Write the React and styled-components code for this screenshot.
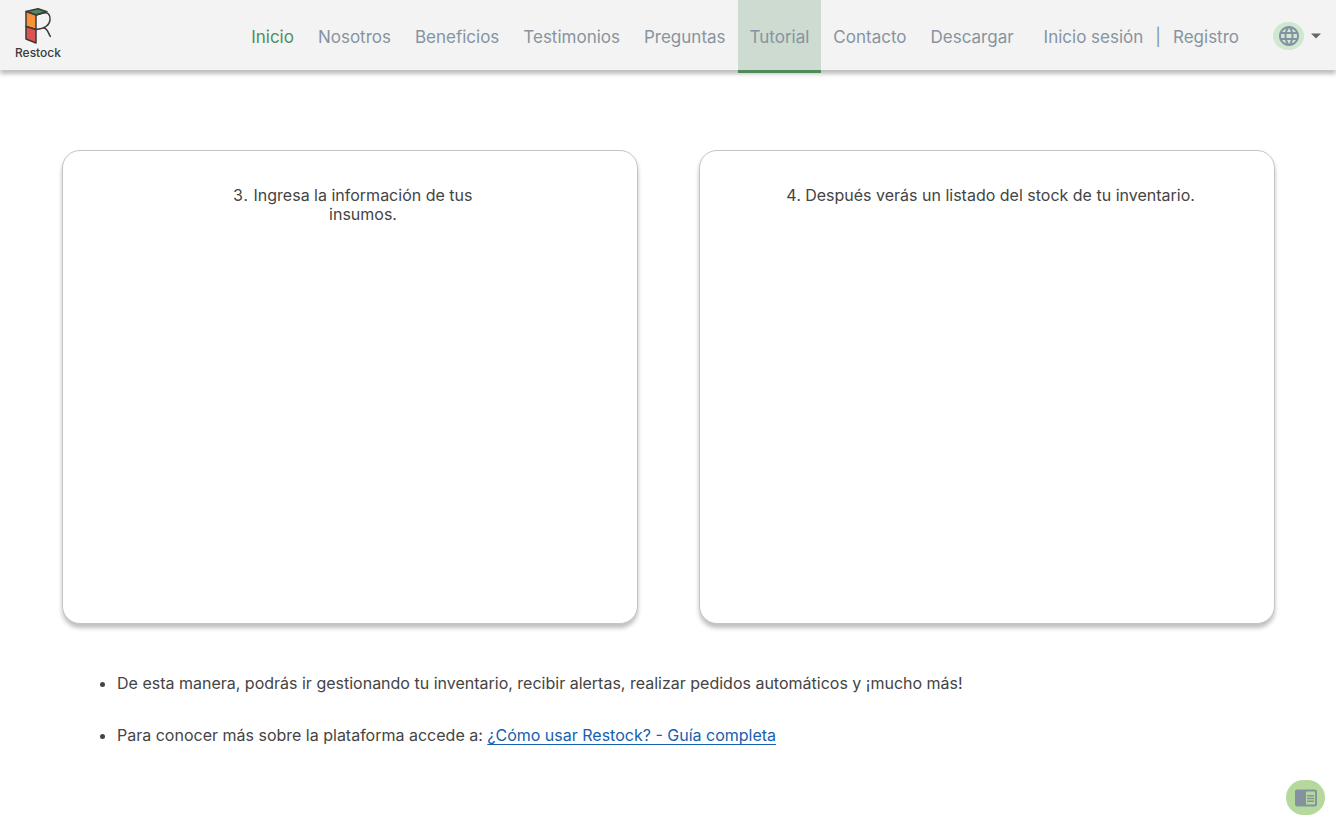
import React from "react";
import styled, { createGlobalStyle } from "styled-components";

const GlobalStyle = createGlobalStyle`
  *, *::before, *::after { box-sizing: border-box; }
  body {
    margin: 0;
    background: #fff;
    color: #444;
    font: 400 16px/19px Inter, "Liberation Sans", sans-serif;
  }
`;

const Page = styled.div`
  display: flex;
  flex-direction: column;
  min-height: 100vh;
`;

const Header = styled.header`
  display: flex;
  align-items: stretch;
  min-height: 70px;
  padding: 0 14px 0 15px;
  background: #f3f3f3;
  box-shadow: 0 4px 4px rgba(0, 0, 0, 0.25);
`;

const Brand = styled.a`
  display: flex;
  flex-direction: column;
  align-items: center;
  padding-top: 7px;
  color: #3a3a3a;
  font-size: 12px;
  font-weight: 500;
  line-height: 16px;
  text-decoration: none;
`;

const Nav = styled.nav`
  display: flex;
  margin-left: auto;
`;

const NavLink = styled.a`
  display: flex;
  align-items: center;
  padding: 3px 12px 0;
  margin-bottom: -3px;
  border-bottom: 3px solid ${(p) => (p.$active ? "#4f8a5b" : "transparent")};
  background: ${(p) => (p.$active ? "#cddbd1" : "transparent")};
  color: ${(p) => (p.$current ? "#4f8f5b" : "#8793a0")};
  font-size: 17px;
  line-height: 24px;
  text-decoration: none;
`;

const Account = styled.div`
  display: flex;
  align-items: center;
  gap: 12px;
  margin-left: 18px;
  padding-top: 3px;
  color: #8793a0;
  font-size: 17px;
  line-height: 24px;
`;

const AccountLink = styled.a`
  color: inherit;
  text-decoration: none;
`;

const LanguageButton = styled.button`
  display: flex;
  align-items: center;
  align-self: center;
  gap: 6px;
  margin-left: 34px;
  padding: 2px 0 0;
  border: 0;
  background: none;
  cursor: pointer;
`;

const Globe = styled.span`
  display: grid;
  place-items: center;
  width: 31px;
  height: 28px;
  border-radius: 50%;
  background: #cfe8d2;
`;

const Main = styled.main`
  flex: 1;
  padding: 80px 61px 0 62px;
`;

const Cards = styled.div`
  display: grid;
  grid-template-columns: 1fr 1fr;
  gap: 61px;
`;

const Card = styled.section`
  min-height: 474px;
  padding: 35px 24px;
  border: 1px solid #c4c4c4;
  border-radius: 18px;
  background: #fff;
  box-shadow: 0 4px 4px rgba(0, 0, 0, 0.25);
`;

const Step = styled.ol`
  width: fit-content;
  max-width: ${(p) => (p.$narrow ? "248px" : "none")};
  margin: 0 auto;
  padding-left: 26px;
  text-align: center;
`;

const Notes = styled.ul`
  display: flex;
  flex-direction: column;
  gap: 33px;
  margin: 50px 0 0;
  padding-left: 55px;
`;

const GuideLink = styled.a`
  color: #1560b0;
  text-underline-offset: 3px;
`;

const GuideButton = styled.button`
  position: fixed;
  right: 11px;
  bottom: 13px;
  display: grid;
  place-items: center;
  width: 39px;
  height: 35px;
  padding: 0;
  border: 0;
  border-radius: 18px;
  background: #b5d99c;
  cursor: pointer;
`;

const links = ["Inicio", "Nosotros", "Beneficios", "Testimonios", "Preguntas", "Tutorial", "Contacto", "Descargar"];

function Logo() {
  return (
    <svg width="28" height="38" viewBox="0 0 28 38" aria-hidden="true">
      <g stroke="#3a3a3a" strokeWidth="1.5" strokeLinejoin="round" strokeLinecap="round">
        <path d="M2 4.5 L14 1.7 L23 4.7 L12 8Z" fill="#4f8a5b" />
        <path d="M2 4.5 L12 8 V22.5 L2 19.5Z" fill="#f7913a" />
        <path d="M2 19.5 L12 22.5 V36 L2 32Z" fill="#dc5350" />
        <path d="M12 8 L19 6 C24 4.5 26.5 8 26 13 C25.5 19 21 21.5 12 22.5 M19.5 20.8 C23.5 21.5 24 25.5 26.3 29.5" fill="none" />
      </g>
    </svg>
  );
}

function GlobeIcon() {
  return (
    <svg width="24" height="24" viewBox="0 0 24 24" fill="#84919e" aria-hidden="true">
      <path d="M11.99 2C6.47 2 2 6.48 2 12s4.47 10 9.99 10C17.52 22 22 17.52 22 12S17.52 2 11.99 2zm6.93 6h-2.95a15.65 15.65 0 0 0-1.38-3.56A8.03 8.03 0 0 1 18.92 8zM12 4.04c.83 1.2 1.48 2.53 1.91 3.96h-3.82c.43-1.43 1.08-2.76 1.91-3.96zM4.26 14C4.1 13.36 4 12.69 4 12s.1-1.36.26-2h3.38c-.08.66-.14 1.32-.14 2s.06 1.34.14 2H4.26zm.82 2h2.95c.32 1.25.78 2.45 1.38 3.56A7.99 7.99 0 0 1 5.08 16zm2.95-8H5.08a7.99 7.99 0 0 1 4.33-3.56A15.65 15.65 0 0 0 8.03 8zM12 19.96c-.83-1.2-1.48-2.53-1.91-3.96h3.82c-.43 1.43-1.08 2.76-1.91 3.96zM14.34 14H9.66c-.09-.66-.16-1.32-.16-2s.07-1.35.16-2h4.68c.09.65.16 1.32.16 2s-.07 1.34-.16 2zm.25 5.56c.6-1.11 1.06-2.31 1.38-3.56h2.95a8.03 8.03 0 0 1-4.33 3.56zM16.36 14c.08-.66.14-1.32.14-2s-.06-1.34-.14-2h3.38c.16.64.26 1.31.26 2s-.1 1.36-.26 2h-3.38z" />
    </svg>
  );
}

export default function App() {
  return (
    <Page>
      <GlobalStyle />
      <Header>
        <Brand href="#inicio">
          <Logo />
          Restock
        </Brand>
        <Nav aria-label="Principal">
          {links.map((name) => (
            <NavLink
              key={name}
              href={`#${name.toLowerCase()}`}
              $current={name === "Inicio"}
              $active={name === "Tutorial"}
            >
              {name}
            </NavLink>
          ))}
        </Nav>
        <Account>
          <AccountLink href="#sesion">Inicio sesión</AccountLink>
          <span>|</span>
          <AccountLink href="#registro">Registro</AccountLink>
        </Account>
        <LanguageButton type="button" aria-label="Idioma">
          <Globe>
            <GlobeIcon />
          </Globe>
          <svg width="12" height="6" viewBox="0 0 12 6" aria-hidden="true">
            <path d="M1 0.5h10L6 5.5z" fill="#666" />
          </svg>
        </LanguageButton>
      </Header>
      <Main>
        <Cards>
          <Card>
            <Step start={3} $narrow>
              <li>Ingresa la información de tus insumos.</li>
            </Step>
          </Card>
          <Card>
            <Step start={4}>
              <li>Después verás un listado del stock de tu inventario.</li>
            </Step>
          </Card>
        </Cards>
        <Notes>
          <li>De esta manera, podrás ir gestionando tu inventario, recibir alertas, realizar pedidos automáticos y ¡mucho más!</li>
          <li>
            Para conocer más sobre la plataforma accede a:{" "}
            <GuideLink href="#guia">¿Cómo usar Restock? - Guía completa</GuideLink>
          </li>
        </Notes>
      </Main>
      <GuideButton type="button" aria-label="Guía">
        <svg width="24" height="24" viewBox="0 0 24 24" aria-hidden="true">
          <path
            fill="#84919e"
            fillRule="evenodd"
            d="M3 3.5h18a2 2 0 0 1 2 2v13a2 2 0 0 1-2 2H3a2 2 0 0 1-2-2v-13a2 2 0 0 1 2-2zM12 5.5v13h9v-13zM13 9h7v1.5h-7zM13 11.7h7v1.5h-7zM13 14.4h7v1.5h-7z"
          />
        </svg>
      </GuideButton>
    </Page>
  );
}
